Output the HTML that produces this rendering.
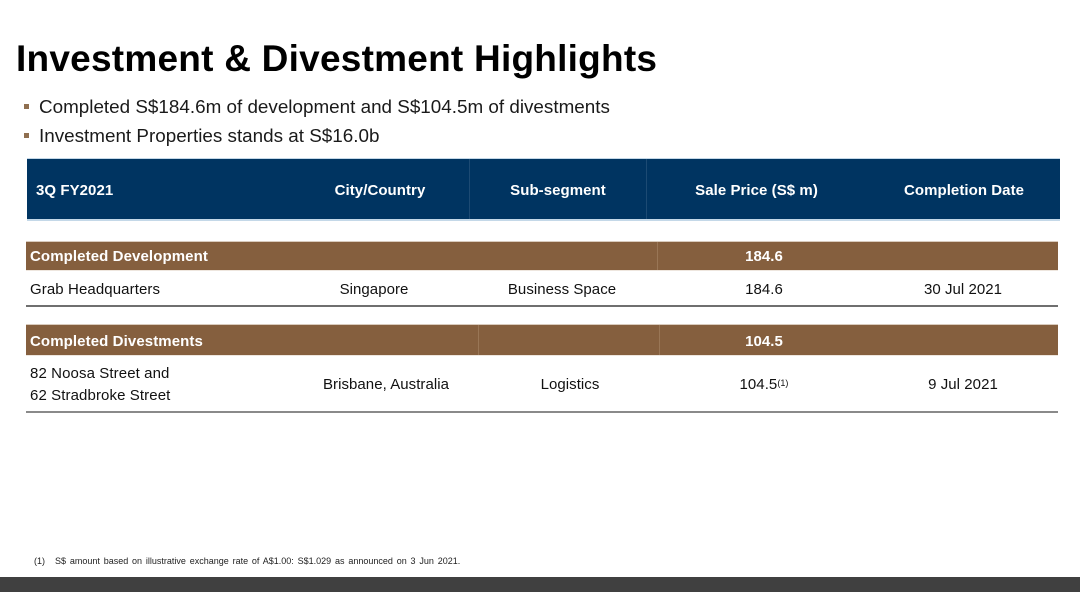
<!DOCTYPE html>
<html><head><meta charset="utf-8"><style>
html,body{margin:0;padding:0;background:#fff}
#p{position:relative;width:1080px;height:592px;overflow:hidden;background:#fff;font-family:"Liberation Sans",sans-serif;color:#111;filter:blur(.3px)}
#p div{position:absolute;white-space:nowrap}
.c{transform:translateX(-50%);font-size:15px;line-height:18px;letter-spacing:.05px}
.h{color:#fff;font-weight:bold;font-size:15px;line-height:18px;letter-spacing:.06px}
.b{background:#855f3e;left:26px;width:1032px;border-top:1px solid #d9cbbd;border-bottom:1px solid #eee6de;box-sizing:border-box}
.l{font-size:15px;line-height:18px;letter-spacing:.1px}
</style></head><body><div id="p">
<div style="left:16px;top:37px;font-size:37px;line-height:44px;font-weight:bold;color:#000;letter-spacing:.235px">Investment &amp; Divestment Highlights</div>
<div style="left:24px;top:104px;width:5px;height:5px;background:#8f6f50"></div>
<div style="left:24px;top:133px;width:5px;height:5px;background:#8f6f50"></div>
<div style="left:39px;top:95px;font-size:18.85px;line-height:24px;color:#1a1a1a">Completed S$184.6m of development and S$104.5m of divestments</div>
<div style="left:39px;top:124px;font-size:18.85px;line-height:24px;color:#1a1a1a">Investment Properties stands at S$16.0b</div>

<div style="left:27px;top:158px;width:1033px;height:63px;background:#c4d8e8"></div>
<div style="left:27px;top:159px;width:1033px;height:60px;background:#003461"></div>
<div style="left:469px;top:159px;width:1px;height:60px;background:#1c4a73"></div>
<div style="left:646px;top:159px;width:1px;height:60px;background:#1c4a73"></div>
<div class="h" style="left:36px;top:182px">3Q FY2021</div>
<div class="h c" style="left:380px;top:182px">City/Country</div>
<div class="h c" style="left:558px;top:182px">Sub-segment</div>
<div class="h c" style="left:756.5px;top:182px">Sale Price (S$ m)</div>
<div class="h c" style="left:964px;top:182px">Completion Date</div>

<div class="b" style="top:241px;height:30px"></div>
<div style="left:657px;top:242px;width:1px;height:28px;background:#997656"></div>
<div class="h" style="left:30px;top:248px;letter-spacing:.1px">Completed Development</div>
<div class="h c" style="left:764px;top:248px">184.6</div>
<div class="l" style="left:30px;top:281px">Grab Headquarters</div>
<div class="c" style="left:374px;top:281px">Singapore</div>
<div class="c" style="left:562px;top:281px">Business Space</div>
<div class="c" style="left:764px;top:281px">184.6</div>
<div class="c" style="left:963px;top:281px">30 Jul 2021</div>
<div style="left:26px;top:305px;width:1032px;height:2px;background:#6f6f6f"></div>

<div class="b" style="top:324px;height:32px"></div>
<div style="left:478px;top:325px;width:1px;height:30px;background:#997656"></div>
<div style="left:659px;top:325px;width:1px;height:30px;background:#997656"></div>
<div class="h" style="left:30px;top:333px;letter-spacing:.1px">Completed Divestments</div>
<div class="h c" style="left:764px;top:333px">104.5</div>
<div class="l" style="left:30px;top:365px">82 Noosa Street and</div>
<div class="l" style="left:30px;top:387px">62 Stradbroke Street</div>
<div class="c" style="left:386px;top:376px">Brisbane, Australia</div>
<div class="c" style="left:570px;top:376px">Logistics</div>
<div class="c" style="left:764px;top:376px">104.5<span style="font-size:9px;position:relative;top:-3px">(1)</span></div>
<div class="c" style="left:963px;top:376px">9 Jul 2021</div>
<div style="left:26px;top:411px;width:1032px;height:2px;background:#8a8a8a"></div>

<div style="left:34px;top:555px;font-size:9px;line-height:12px;color:#222">(1)</div>
<div style="left:55px;top:555px;font-size:9px;line-height:12px;color:#222;word-spacing:1.33px">S$ amount based on illustrative exchange rate of A$1.00: S$1.029 as announced on 3 Jun 2021.</div>
<div style="left:0;top:577px;width:1080px;height:15px;background:#404040"></div>
</div></body></html>
